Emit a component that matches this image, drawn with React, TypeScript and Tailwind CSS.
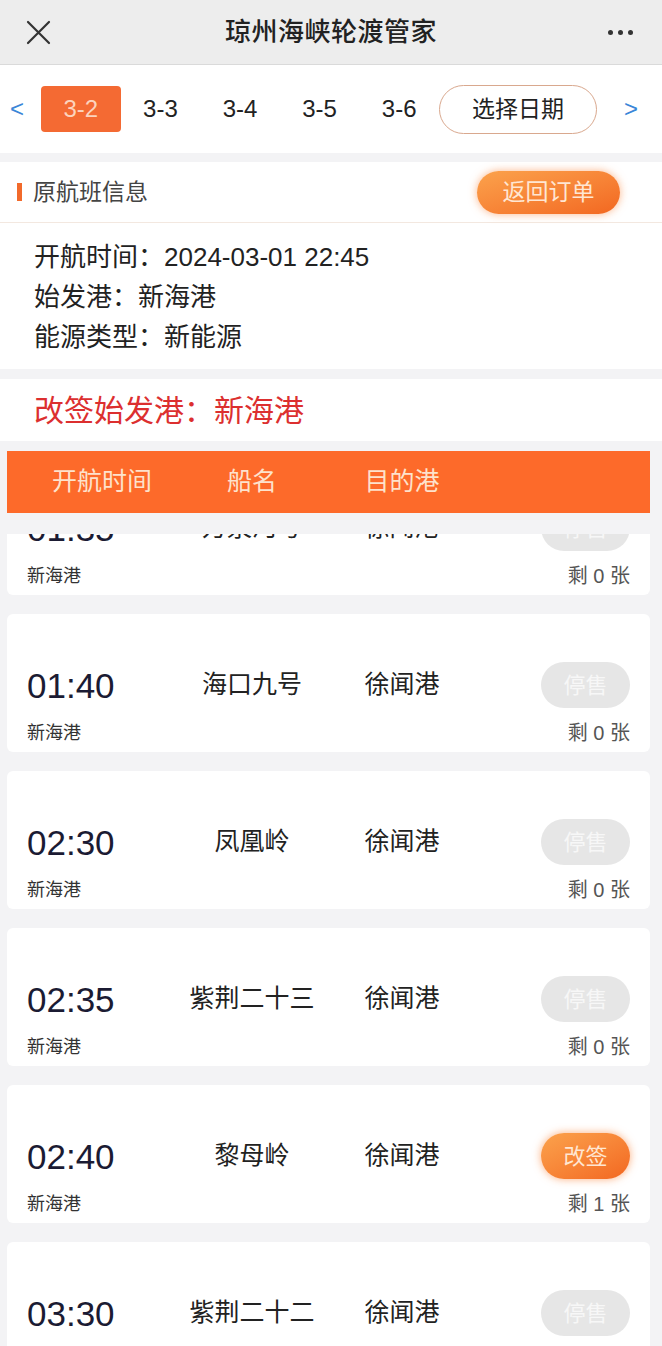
import React from 'react';

const flights = [
    { time: '01:35', ship: '万泉河号', dest: '徐闻港', left: 0, open: false },
    { time: '01:40', ship: '海口九号', dest: '徐闻港', left: 0, open: false },
    { time: '02:30', ship: '凤凰岭', dest: '徐闻港', left: 0, open: false },
    { time: '02:35', ship: '紫荆二十三', dest: '徐闻港', left: 0, open: false },
    { time: '02:40', ship: '黎母岭', dest: '徐闻港', left: 1, open: true },
    { time: '03:30', ship: '紫荆二十二', dest: '徐闻港', left: 0, open: false },
];

const dates = ['3-2', '3-3', '3-4', '3-5', '3-6'];

export default function App() {
    return (
        <div className="h-[1346px] overflow-hidden bg-[#f3f3f5] font-['Liberation_Sans','Noto_Sans_CJK_SC',sans-serif] text-[#222]">
            {/* top bar */}
            <div className="grid h-[65px] grid-cols-[80px_1fr_80px] items-center border-b border-[#dadada] bg-[#ededed]">
                <svg className="ml-[26px]" width="25" height="25" viewBox="0 0 25 25" fill="none" stroke="#333" strokeWidth="2.2" strokeLinecap="round">
                    <path d="M2 2L23 23M23 2L2 23" />
                </svg>
                <div className="text-center text-[26px] font-medium tracking-[0.5px] text-[#222]">琼州海峡轮渡管家</div>
                <div className="flex justify-end gap-[5px] pr-[29px]">
                    <span className="h-[5px] w-[5px] rounded-full bg-[#333]" />
                    <span className="h-[5px] w-[5px] rounded-full bg-[#333]" />
                    <span className="h-[5px] w-[5px] rounded-full bg-[#333]" />
                </div>
            </div>

            {/* date bar */}
            <div className="flex h-[88px] items-center bg-white pl-[10px]">
                <span className="w-[31px] text-[24px] text-[#3a86d8]">&lt;</span>
                {dates.map((d, i) => (
                    <div key={d} className="flex w-[79.6px] justify-center">
                        {i === 0 ? (
                            <span className="flex h-[46px] w-[80px] items-center justify-center rounded-[4px] bg-[#f46a33] text-[24px] text-[#fcd3bd]">{d}</span>
                        ) : (
                            <span className="text-[24px] text-[#222]">{d}</span>
                        )}
                    </div>
                ))}
                <div className="flex h-[49px] w-[158px] items-center justify-center rounded-full border border-[#d9a88e] text-[23px] text-[#222]">选择日期</div>
                <span className="ml-[27px] text-[24px] text-[#3a86d8]">&gt;</span>
            </div>

            {/* original flight */}
            <div className="mt-[9px] bg-white">
                <div className="flex h-[61px] items-center border-b border-[#f3e8e0] pl-[17px] pr-[42px]">
                    <span className="h-[18px] w-[5px] bg-[#f26a2b]" />
                    <span className="ml-[11px] text-[23px] text-[#444]">原航班信息</span>
                    <button className="ml-auto flex h-[43px] w-[143px] items-center justify-center rounded-full bg-gradient-to-br from-[#fba24c] to-[#f26720] text-[23px] text-[#ffe6d2] shadow-[0_0_8px_rgba(250,120,40,0.55)]">返回订单</button>
                </div>
                <div className="pb-[12px] pl-[34px] pt-[14px] text-[26px] leading-[40px] text-[#222]">
                    <div>开航时间：2024-03-01 22:45</div>
                    <div>始发港：新海港</div>
                    <div>能源类型：新能源</div>
                </div>
            </div>

            <div className="mt-[10px] flex h-[62px] items-center bg-white pl-[34px] text-[30px] text-[#dc2f2f]">改签始发港：新海港</div>

            {/* sticky header */}
            <div className="relative z-10 bg-[#f3f3f5] pb-[21px] pt-[10px]">
                <div className="ml-[7px] flex h-[62px] w-[643px] items-center bg-[#fd6a2a] pl-[20px] text-[25px] text-[#fde2cc]">
                    <span className="w-[150px] text-center">开航时间</span>
                    <span className="w-[150px] text-center">船名</span>
                    <span className="w-[150px] text-center">目的港</span>
                </div>
            </div>

            {/* list */}
            <div className="-mt-[77px] flex flex-col gap-[19px] pl-[7px]">
                {flights.map((f) => (
                    <div key={f.time} className="h-[138px] w-[643px] rounded-[6px] bg-white px-[20px] pt-[48px]">
                        <div className="flex h-[46px] items-center">
                            <span className="w-[150px] text-[35px] leading-none text-[#1b1b33]">{f.time}</span>
                            <span className="w-[150px] text-center text-[25px] text-[#222]">{f.ship}</span>
                            <span className="w-[150px] text-center text-[25px] text-[#222]">{f.dest}</span>
                            {f.open ? (
                                <button className="ml-auto flex h-[46px] w-[89px] items-center justify-center rounded-full bg-gradient-to-br from-[#fba24c] to-[#f26720] text-[22px] text-[#ffe6d2] shadow-[0_0_8px_rgba(250,120,40,0.6)]">改签</button>
                            ) : (
                                <button className="ml-auto flex h-[46px] w-[89px] items-center justify-center rounded-full bg-[#e6e6e6] text-[22px] text-[#f7f7f7]">停售</button>
                            )}
                        </div>
                        <div className="mt-[14px] flex h-[22px] items-center justify-between">
                            <span className="text-[18px] text-[#333]">新海港</span>
                            <span className="text-[20px] text-[#555]">剩 {f.left} 张</span>
                        </div>
                    </div>
                ))}
            </div>
        </div>
    );
}
